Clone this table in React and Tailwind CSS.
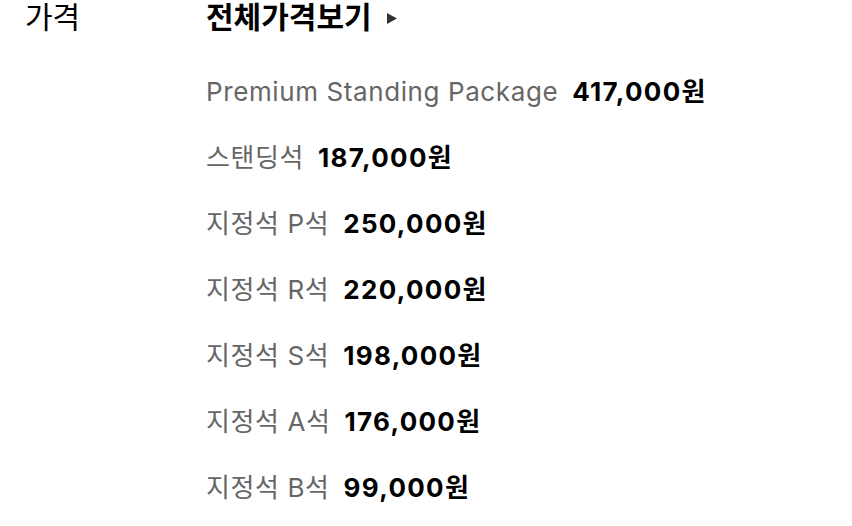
const prices = [
  { label: "Premium Standing Package", price: "417,000원" },
  { label: "스탠딩석", price: "187,000원" },
  { label: "지정석 P석", price: "250,000원" },
  { label: "지정석 R석", price: "220,000원" },
  { label: "지정석 S석", price: "198,000원" },
  { label: "지정석 A석", price: "176,000원" },
  { label: "지정석 B석", price: "99,000원" },
];

export default function App() {
  return (
    <div
      className="w-[852px] h-[526px] bg-white overflow-hidden flex pl-[25px]"
      style={{ fontFamily: "Inter, 'Noto Sans CJK KR', sans-serif" }}
    >
      <div className="w-[181px] shrink-0 text-[30px] leading-[34px] text-black">가격</div>
      <div className="flex flex-col">
        <div className="flex items-center gap-[14px] text-[30px] leading-[34px] font-bold text-black">
          전체가격보기
          <svg width="12" height="13" viewBox="0 0 12 13" className="mt-[2px]">
            <path d="M1 1 L11 6.5 L1 12 Z" fill="#333" />
          </svg>
        </div>
        <div className="flex flex-col gap-[34px] mt-[42px]">
          {prices.map((p) => (
            <div key={p.label} className="flex items-center text-[26px] leading-[32px]">
              <span className="text-[#666] tracking-[0.6px]">{p.label}</span>
              <span className="ml-[14px] font-bold text-black tracking-[1.3px]">{p.price}</span>
            </div>
          ))}
        </div>
      </div>
    </div>
  );
}
